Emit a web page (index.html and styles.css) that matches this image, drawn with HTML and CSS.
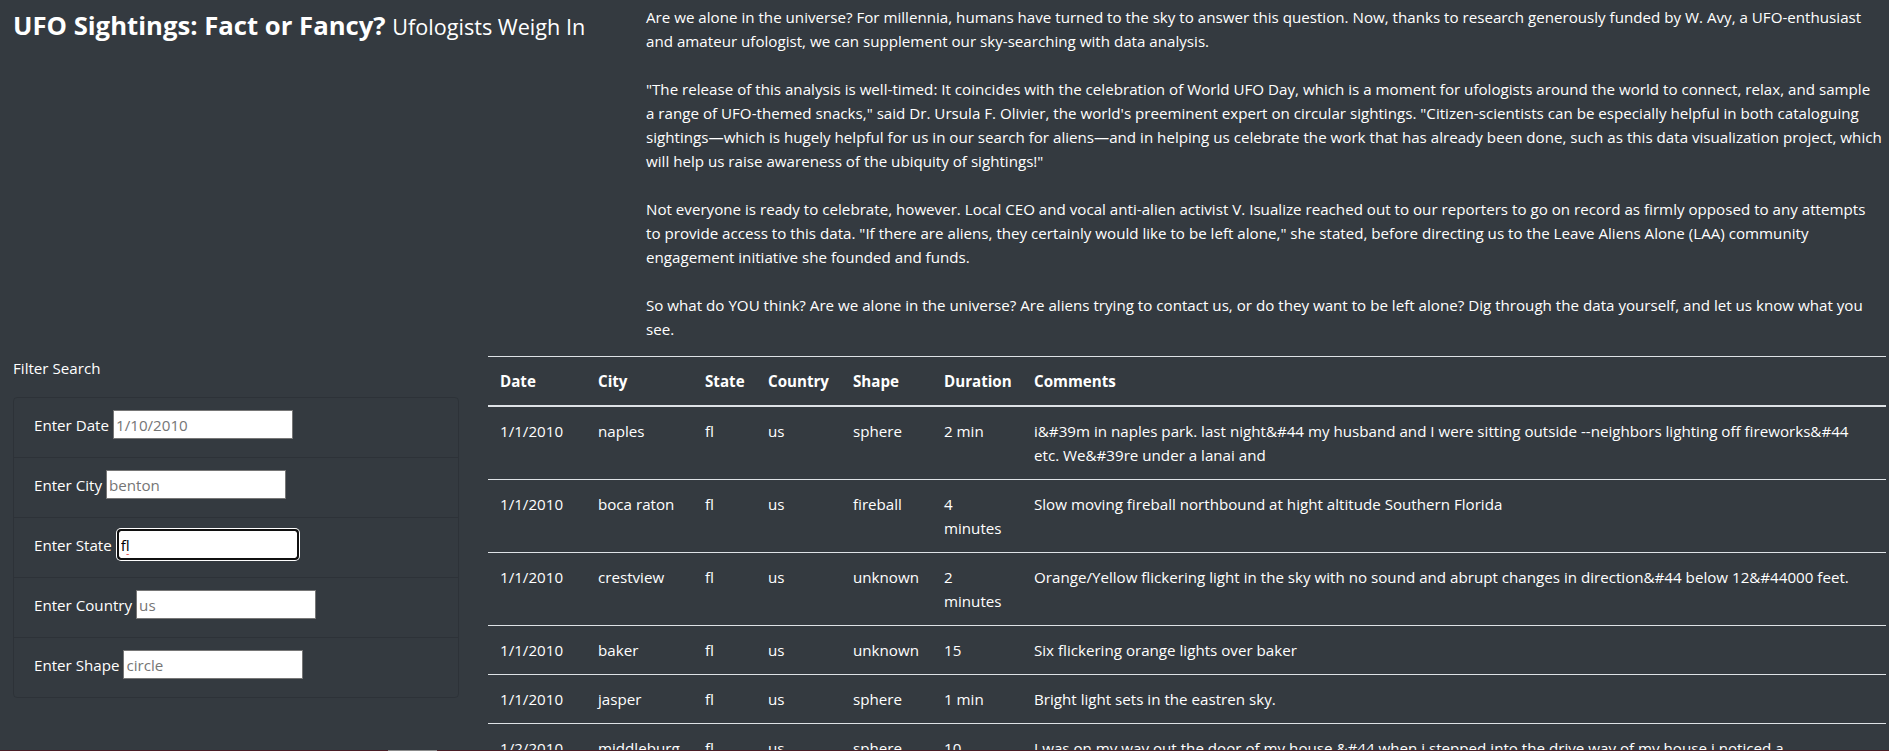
FILE: index.html
```html
<!DOCTYPE html>
<html lang="en">
<head>
<meta charset="utf-8">
<title>UFO Sightings: Fact or Fancy?</title>
<link rel="stylesheet" href="styles.css">
</head>
<body>
<div class="page">
  <header class="intro">
    <h1 class="title">UFO Sightings: Fact or Fancy? <small>Ufologists Weigh In</small></h1>
    <div class="story">
      <p>Are we alone in the universe? For millennia, humans have turned to the sky to answer this question. Now, thanks to research generously funded by W. Avy, a UFO-enthusiast<br>and amateur ufologist, we can supplement our sky-searching with data analysis.</p>
      <p>"The release of this analysis is well-timed: It coincides with the celebration of World UFO Day, which is a moment for ufologists around the world to connect, relax, and sample<br>a range of UFO-themed snacks," said Dr. Ursula F. Olivier, the world's preeminent expert on circular sightings. "Citizen-scientists can be especially helpful in both cataloguing<br>sightings—which is hugely helpful for us in our search for aliens—and in helping us celebrate the work that has already been done, such as this data visualization project, which<br>will help us raise awareness of the ubiquity of sightings!"</p>
      <p>Not everyone is ready to celebrate, however. Local CEO and vocal anti-alien activist V. Isualize reached out to our reporters to go on record as firmly opposed to any attempts<br>to provide access to this data. "If there are aliens, they certainly would like to be left alone," she stated, before directing us to the Leave Aliens Alone (LAA) community<br>engagement initiative she founded and funds.</p>
      <p>So what do YOU think? Are we alone in the universe? Are aliens trying to contact us, or do they want to be left alone? Dig through the data yourself, and let us know what you<br>see.</p>
    </div>
  </header>

  <main class="content">
    <aside class="filters">
      <p class="filters-title">Filter Search</p>
      <ul class="filter-list">
        <li class="filter-item"><label for="datetime">Enter Date</label><input id="datetime" type="text" placeholder="1/10/2010"></li>
        <li class="filter-item"><label for="city">Enter City</label><input id="city" type="text" placeholder="benton"></li>
        <li class="filter-item"><label for="state">Enter State</label><input id="state" class="is-focused" type="text" value="fl"></li>
        <li class="filter-item"><label for="country">Enter Country</label><input id="country" type="text" placeholder="us"></li>
        <li class="filter-item"><label for="shape">Enter Shape</label><input id="shape" type="text" placeholder="circle"></li>
      </ul>
    </aside>

    <section class="results">
      <table class="sightings">
        <colgroup>
          <col class="col-date">
          <col class="col-city">
          <col class="col-state">
          <col class="col-country">
          <col class="col-shape">
          <col class="col-duration">
          <col class="col-comments">
        </colgroup>
        <thead>
          <tr>
            <th>Date</th>
            <th>City</th>
            <th>State</th>
            <th>Country</th>
            <th>Shape</th>
            <th>Duration</th>
            <th>Comments</th>
          </tr>
        </thead>
        <tbody>
          <tr>
            <td>1/1/2010</td><td>naples</td><td>fl</td><td>us</td><td>sphere</td><td>2 min</td>
            <td class="comment">i&amp;#39m in naples park. last night&amp;#44 my husband and I were sitting outside --neighbors lighting off fireworks&amp;#44 etc. We&amp;#39re under a lanai and</td>
          </tr>
          <tr>
            <td>1/1/2010</td><td>boca raton</td><td>fl</td><td>us</td><td>fireball</td><td>4 minutes</td>
            <td class="comment">Slow moving fireball northbound at hight altitude Southern Florida</td>
          </tr>
          <tr>
            <td>1/1/2010</td><td>crestview</td><td>fl</td><td>us</td><td>unknown</td><td>2 minutes</td>
            <td class="comment">Orange/Yellow flickering light in the sky with no sound and abrupt changes in direction&amp;#44 below 12&amp;#44000 feet.</td>
          </tr>
          <tr>
            <td>1/1/2010</td><td>baker</td><td>fl</td><td>us</td><td>unknown</td><td>15</td>
            <td class="comment">Six flickering orange lights over baker</td>
          </tr>
          <tr>
            <td>1/1/2010</td><td>jasper</td><td>fl</td><td>us</td><td>sphere</td><td>1 min</td>
            <td class="comment">Bright light sets in the eastren sky.</td>
          </tr>
          <tr>
            <td>1/2/2010</td><td>middleburg</td><td>fl</td><td>us</td><td>sphere</td><td>10 minutes</td>
            <td class="comment">I was on my way out the door of my house &amp;#44 when i stepped into the drive way of my house i noticed a</td>
          </tr>
        </tbody>
      </table>
    </section>
  </main>
</div>
<div class="window-edge"><span class="window-edge-thumb"></span></div>
</body>
</html>
```

FILE: styles.css
```css
* {
  box-sizing: border-box;
}

html,
body {
  margin: 0;
  padding: 0;
}

body {
  background: #343a40;
  color: #ffffff;
  font-family: "Open Sans", "Noto Sans", sans-serif;
  font-size: 15.15px;
  line-height: 24px;
  overflow: hidden;
}

.page {
  padding: 0 3px 0 13px;
}

/* ---------- intro ---------- */
.intro {
  display: grid;
  grid-template-columns: 633px 1fr;
}

.title {
  margin: 9px 0 0;
  font-size: 25.7px;
  font-weight: 700;
  line-height: 34px;
  white-space: nowrap;
}

.title small {
  font-size: 21.6px;
  font-weight: 400;
}

.story {
  padding-top: 5px;
  margin-right: -3px;
}

.story p {
  margin: 0 0 24px;
}

.story p:last-child {
  margin-bottom: 15px;
}

/* ---------- content ---------- */
.content {
  display: grid;
  grid-template-columns: 446px 1fr;
  column-gap: 29px;
  align-items: start;
}

.filters-title {
  margin: 0 0 17px;
}

.filter-list {
  list-style: none;
  margin: 0;
  padding: 0;
  border: 1px solid rgba(0, 0, 0, 0.125);
  border-radius: 4px;
}

.filter-item {
  display: flex;
  align-items: center;
  height: 59px;
  padding: 0 20px 6px;
}

.filter-item + .filter-item {
  height: 60px;
  border-top: 1px solid rgba(0, 0, 0, 0.125);
}

.filter-item label {
  margin-right: 4px;
}

.filter-item input {
  width: 180px;
  height: 29px;
  padding: 1px 2px;
  border: 1px solid #767676;
  border-radius: 0;
  background: #ffffff;
  color: #000000;
  font-family: inherit;
  font-size: 15.15px;
  line-height: 24px;
}

.filter-item input::placeholder {
  color: #757575;
}

.filter-item input.is-focused {
  margin-left: 2px;
  outline: 2px solid #101010;
  outline-offset: -1px;
  border-color: #101010;
  border-radius: 3px;
  box-shadow: 0 0 0 2px #ffffff;
  text-decoration: underline wavy #e02020;
  text-underline-offset: 3px;
}

/* ---------- table ---------- */
.sightings {
  width: 100%;
  border-collapse: collapse;
  table-layout: fixed;
  color: #ffffff;
}

.col-date { width: 98px; }
.col-city { width: 107px; }
.col-state { width: 63px; }
.col-country { width: 85px; }
.col-shape { width: 91px; }
.col-duration { width: 90px; }

.sightings th,
.sightings td {
  padding: 12px;
  text-align: left;
  vertical-align: top;
  border-top: 1px solid #dee2e6;
}

.sightings td.comment {
  padding-right: 18px;
}

.sightings thead th {
  font-weight: 700;
  border-bottom: 2px solid #dee2e6;
  white-space: nowrap;
}

/* ---------- bottom window edge ---------- */
.window-edge {
  position: fixed;
  left: 0;
  right: 0;
  bottom: 0;
  height: 1px;
  background: #4a1e26;
}

.window-edge-thumb {
  position: absolute;
  left: 388px;
  width: 49px;
  top: 0;
  height: 1px;
  background: #8c8c8c;
}
```
